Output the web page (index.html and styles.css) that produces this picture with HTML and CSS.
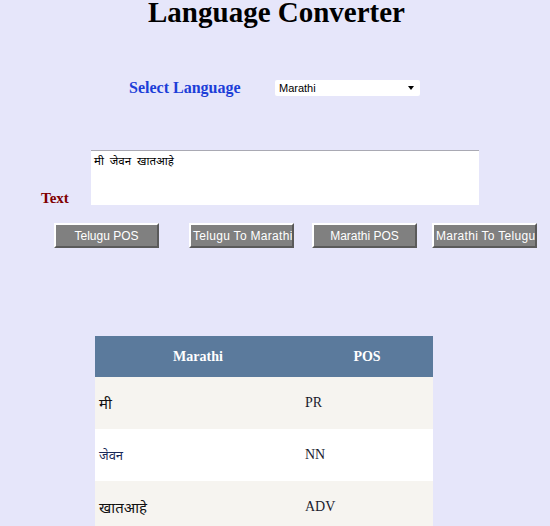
FILE: index.html
```html
<!DOCTYPE html>
<html>
<head>
<meta charset="utf-8">
<link rel="stylesheet" href="styles.css">
</head>
<body>
<h1 class="title">Language Converter</h1>
<div class="lang-row">
  <span class="lang-label">Select Language</span>
  <div class="select"><span>Marathi</span><span class="arrow"></span></div>
</div>
<div class="text-row">
  <span class="text-label">Text</span>
  <div class="textarea">मी  जेवन  खातआहे<span class="grip"></span></div>
</div>
<div class="btn-row">
  <button class="btn b1">Telugu POS</button>
  <button class="btn b2">Telugu To Marathi</button>
  <button class="btn b3">Marathi POS</button>
  <button class="btn b4">Marathi To Telugu</button>
</div>
<table class="result">
  <thead>
    <tr><th class="c1">Marathi</th><th class="c2">POS</th></tr>
  </thead>
  <tbody>
    <tr class="odd"><td class="dev1">मी</td><td>PR</td></tr>
    <tr class="even"><td class="dev2">जेवन</td><td>NN</td></tr>
    <tr class="odd"><td class="dev1">खातआहे</td><td>ADV</td></tr>
  </tbody>
</table>
</body>
</html>
```
FILE: styles.css
```css
html, body {
  margin: 0;
  padding: 0;
  background: #e6e6fa;
  font-family: "Liberation Serif", "Times New Roman", serif;
}
.title {
  margin: 0;
  text-align: center;
  font-size: 29px;
  line-height: 24px;
  padding-left: 3px;
  font-weight: bold;
  color: #000;
}
.lang-row {
  display: flex;
  align-items: center;
  margin-top: 56px;
  padding-left: 129px;
  height: 16px;
}
.lang-label {
  color: #1c3ed8;
  font-weight: bold;
  font-size: 16px;
  width: 146px;
}
.select {
  width: 145px;
  height: 16px;
  background: #fff;
  border-radius: 2px;
  display: flex;
  align-items: center;
  justify-content: space-between;
  font-family: "Liberation Sans", Arial, sans-serif;
  font-size: 11px;
  padding: 0 6px 0 4px;
  box-sizing: border-box;
}
.arrow {
  width: 0;
  height: 0;
  border-left: 3px solid transparent;
  border-right: 3px solid transparent;
  border-top: 4px solid #000;
}
.text-row {
  display: flex;
  align-items: flex-end;
  margin-top: 54px;
  padding-left: 41px;
}
.text-label {
  color: #800000;
  font-weight: bold;
  font-size: 15px;
  width: 50px;
  line-height: 14px;
  margin-bottom: 0;
}
.textarea {
  position: relative;
  width: 388px;
  height: 55px;
  background: #fff;
  border-top: 1px solid #a9a9b3;
  box-sizing: border-box;
  font-family: "Noto Sans", "Liberation Sans", sans-serif;
  font-size: 11.5px;
  padding: 2px 3px;
  white-space: pre;
  line-height: 16px;
}
.grip {
  position: absolute;
  right: 3px;
  bottom: 3px;
  width: 5px;
  height: 5px;
  background: radial-gradient(circle, #aaa 0.6px, transparent 0.7px) 0 0 / 2px 2px;
}
.btn-row {
  display: flex;
  margin-top: 18px;
  height: 25px;
}
.btn {
  height: 25px;
  width: 105px;
  background: #808080;
  color: #fff;
  font-family: "Liberation Sans", Arial, sans-serif;
  font-size: 12px;
  border: 2px solid;
  border-color: #fff #5a5a5a #5a5a5a #fff;
  padding: 0;
  white-space: nowrap;
  overflow: hidden;
  text-align: center;
}
.b1 { margin-left: 54px; }
.b2 { margin-left: 30px; }
.b3 { margin-left: 18px; }
.b4 { margin-left: 15px; }
.b2, .b4 { text-align: left; padding-left: 2px; letter-spacing: 0.3px; }
.result {
  margin-top: 88px;
  margin-left: 95px;
  border-collapse: collapse;
  width: 338px;
}
.result th {
  background: #5b7a9c;
  color: #fff;
  font-weight: bold;
  font-size: 14px;
  height: 41px;
  padding: 0;
  text-align: center;
}
.result th.c1 { width: 206px; }
.result td {
  height: 52px;
  padding: 0 0 0 4px;
  font-size: 14px;
  color: #1a1a2e;
}
.result tr.odd td { background: #f6f4f0; }
.result tr.even td { background: #fff; }
.result td.dev1 {
  font-family: "Noto Sans", sans-serif;
  font-size: 15px;
  color: #111;
}
.result td.dev2 {
  font-family: "Noto Sans", sans-serif;
  font-size: 13px;
  color: #1a2a5a;
}
```
